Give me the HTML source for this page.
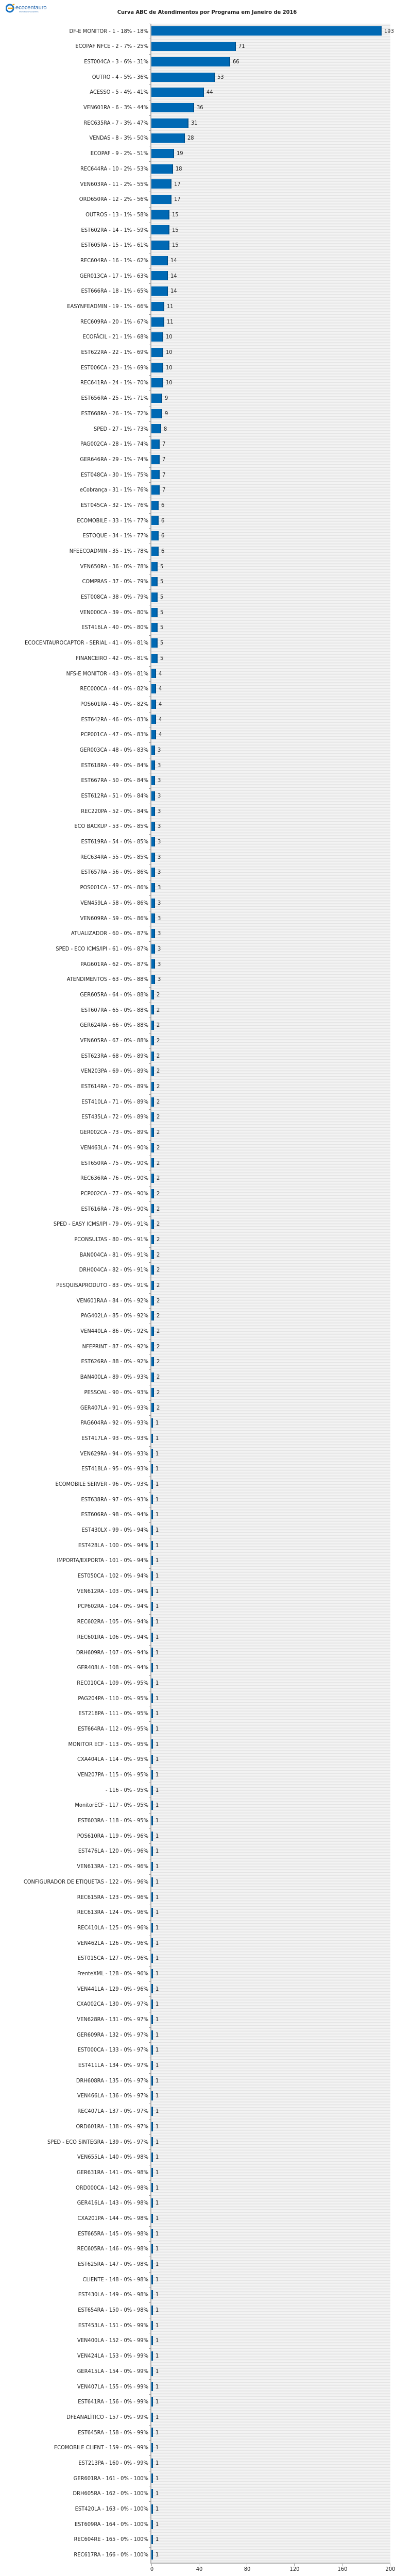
<!DOCTYPE html>
<html><head><meta charset="utf-8">
<style>
*{margin:0;padding:0;box-sizing:border-box}
html,body{width:800px;height:5010px;background:#fff;overflow:hidden}
body{font-family:"DejaVu Sans Condensed","DejaVu Sans","Liberation Sans",sans-serif;color:#222}
#wrap{position:relative;width:800px;height:5010px;overflow:hidden}
#title{position:absolute;top:17px;left:0;width:804px;text-align:center;font-weight:bold;font-size:11px}
#logo{position:absolute;left:11px;top:7px}
#plot{position:absolute;left:294px;top:46px;width:464px;height:4929px;
background:repeating-linear-gradient(to bottom,#e4e4e4 0,#e4e4e4 1px,#f3f3f3 1px,#f3f3f3 3px)}
#axisL{position:absolute;left:292px;top:46px;width:2px;height:4930px;background:#b0b0b0}
#axisB{position:absolute;left:292px;top:4974px;width:466px;height:2px;background:#b0b0b0}
.t{position:absolute;top:4976px;width:1px;height:4px;background:#999}
.tl{position:absolute;top:4980px;width:40px;margin-left:-20px;text-align:center;font-size:11px;line-height:13px}
#rows{position:absolute;left:0;top:45.65px;width:800px}
.r{position:relative;height:29.69px;line-height:29.69px;font-size:11px;white-space:nowrap}
.r::before{content:"";position:absolute;left:289px;top:0;width:4px;height:1px;background:#999}
.l{position:absolute;right:512px;top:0}
.b{position:absolute;left:294px;top:0;height:29.69px}
.bar{display:inline-block;vertical-align:top;margin-top:5.85px;height:18px;background:#0069b4;border-right:2px solid #00508c}
.v{display:inline-block;vertical-align:top;margin-left:5px}
</style></head><body><div id="wrap">
<div id="logo"><svg width="90" height="18" viewBox="0 0 90 18"><circle cx="8" cy="9" r="7" fill="none" stroke="#1a73c4" stroke-width="3"/><path d="M4 9 H15" stroke="#f3a712" stroke-width="2.5"/><path d="M13 3 L17 1" stroke="#f3a712" stroke-width="2"/><text x="19" y="11" font-family="Liberation Sans,sans-serif" font-size="11" fill="#1a5fa8">ecocentauro</text><text x="26" y="17" font-family="Liberation Sans,sans-serif" font-size="3" fill="#1a5fa8">SISTEMAS INTELIGENTES</text></svg></div>
<div id="title">Curva ABC de Atendimentos por Programa em Janeiro de 2016</div>
<div id="plot"></div>
<div id="axisL"></div>
<div id="axisB"></div>
<div class="t" style="left:294px"></div><div class="t" style="left:386px"></div><div class="t" style="left:479px"></div><div class="t" style="left:571px"></div><div class="t" style="left:664px"></div><div class="t" style="left:757px"></div>
<div class="tl" style="left:295px">0</div><div class="tl" style="left:387px">40</div><div class="tl" style="left:480px">80</div><div class="tl" style="left:572px">120</div><div class="tl" style="left:665px">160</div><div class="tl" style="left:758px">200</div>
<div id="rows">
<div class="r"><span class="l">DF-E MONITOR - 1 - 18% - 18%</span><span class="b"><span class="bar" style="width:447px"></span><span class="v">193</span></span></div>
<div class="r"><span class="l">ECOPAF NFCE - 2 - 7% - 25%</span><span class="b"><span class="bar" style="width:164px"></span><span class="v">71</span></span></div>
<div class="r"><span class="l">EST004CA - 3 - 6% - 31%</span><span class="b"><span class="bar" style="width:153px"></span><span class="v">66</span></span></div>
<div class="r"><span class="l">OUTRO - 4 - 5% - 36%</span><span class="b"><span class="bar" style="width:123px"></span><span class="v">53</span></span></div>
<div class="r"><span class="l">ACESSO - 5 - 4% - 41%</span><span class="b"><span class="bar" style="width:102px"></span><span class="v">44</span></span></div>
<div class="r"><span class="l">VEN601RA - 6 - 3% - 44%</span><span class="b"><span class="bar" style="width:83px"></span><span class="v">36</span></span></div>
<div class="r"><span class="l">REC635RA - 7 - 3% - 47%</span><span class="b"><span class="bar" style="width:72px"></span><span class="v">31</span></span></div>
<div class="r"><span class="l">VENDAS - 8 - 3% - 50%</span><span class="b"><span class="bar" style="width:65px"></span><span class="v">28</span></span></div>
<div class="r"><span class="l">ECOPAF - 9 - 2% - 51%</span><span class="b"><span class="bar" style="width:44px"></span><span class="v">19</span></span></div>
<div class="r"><span class="l">REC644RA - 10 - 2% - 53%</span><span class="b"><span class="bar" style="width:42px"></span><span class="v">18</span></span></div>
<div class="r"><span class="l">VEN603RA - 11 - 2% - 55%</span><span class="b"><span class="bar" style="width:39px"></span><span class="v">17</span></span></div>
<div class="r"><span class="l">ORD650RA - 12 - 2% - 56%</span><span class="b"><span class="bar" style="width:39px"></span><span class="v">17</span></span></div>
<div class="r"><span class="l">OUTROS - 13 - 1% - 58%</span><span class="b"><span class="bar" style="width:35px"></span><span class="v">15</span></span></div>
<div class="r"><span class="l">EST602RA - 14 - 1% - 59%</span><span class="b"><span class="bar" style="width:35px"></span><span class="v">15</span></span></div>
<div class="r"><span class="l">EST605RA - 15 - 1% - 61%</span><span class="b"><span class="bar" style="width:35px"></span><span class="v">15</span></span></div>
<div class="r"><span class="l">REC604RA - 16 - 1% - 62%</span><span class="b"><span class="bar" style="width:32px"></span><span class="v">14</span></span></div>
<div class="r"><span class="l">GER013CA - 17 - 1% - 63%</span><span class="b"><span class="bar" style="width:32px"></span><span class="v">14</span></span></div>
<div class="r"><span class="l">EST666RA - 18 - 1% - 65%</span><span class="b"><span class="bar" style="width:32px"></span><span class="v">14</span></span></div>
<div class="r"><span class="l">EASYNFEADMIN - 19 - 1% - 66%</span><span class="b"><span class="bar" style="width:25px"></span><span class="v">11</span></span></div>
<div class="r"><span class="l">REC609RA - 20 - 1% - 67%</span><span class="b"><span class="bar" style="width:25px"></span><span class="v">11</span></span></div>
<div class="r"><span class="l">ECOFÁCIL - 21 - 1% - 68%</span><span class="b"><span class="bar" style="width:23px"></span><span class="v">10</span></span></div>
<div class="r"><span class="l">EST622RA - 22 - 1% - 69%</span><span class="b"><span class="bar" style="width:23px"></span><span class="v">10</span></span></div>
<div class="r"><span class="l">EST006CA - 23 - 1% - 69%</span><span class="b"><span class="bar" style="width:23px"></span><span class="v">10</span></span></div>
<div class="r"><span class="l">REC641RA - 24 - 1% - 70%</span><span class="b"><span class="bar" style="width:23px"></span><span class="v">10</span></span></div>
<div class="r"><span class="l">EST656RA - 25 - 1% - 71%</span><span class="b"><span class="bar" style="width:21px"></span><span class="v">9</span></span></div>
<div class="r"><span class="l">EST668RA - 26 - 1% - 72%</span><span class="b"><span class="bar" style="width:21px"></span><span class="v">9</span></span></div>
<div class="r"><span class="l">SPED - 27 - 1% - 73%</span><span class="b"><span class="bar" style="width:19px"></span><span class="v">8</span></span></div>
<div class="r"><span class="l">PAG002CA - 28 - 1% - 74%</span><span class="b"><span class="bar" style="width:16px"></span><span class="v">7</span></span></div>
<div class="r"><span class="l">GER646RA - 29 - 1% - 74%</span><span class="b"><span class="bar" style="width:16px"></span><span class="v">7</span></span></div>
<div class="r"><span class="l">EST048CA - 30 - 1% - 75%</span><span class="b"><span class="bar" style="width:16px"></span><span class="v">7</span></span></div>
<div class="r"><span class="l">eCobrança - 31 - 1% - 76%</span><span class="b"><span class="bar" style="width:16px"></span><span class="v">7</span></span></div>
<div class="r"><span class="l">EST045CA - 32 - 1% - 76%</span><span class="b"><span class="bar" style="width:14px"></span><span class="v">6</span></span></div>
<div class="r"><span class="l">ECOMOBILE - 33 - 1% - 77%</span><span class="b"><span class="bar" style="width:14px"></span><span class="v">6</span></span></div>
<div class="r"><span class="l">ESTOQUE - 34 - 1% - 77%</span><span class="b"><span class="bar" style="width:14px"></span><span class="v">6</span></span></div>
<div class="r"><span class="l">NFEECOADMIN - 35 - 1% - 78%</span><span class="b"><span class="bar" style="width:14px"></span><span class="v">6</span></span></div>
<div class="r"><span class="l">VEN650RA - 36 - 0% - 78%</span><span class="b"><span class="bar" style="width:12px"></span><span class="v">5</span></span></div>
<div class="r"><span class="l">COMPRAS - 37 - 0% - 79%</span><span class="b"><span class="bar" style="width:12px"></span><span class="v">5</span></span></div>
<div class="r"><span class="l">EST008CA - 38 - 0% - 79%</span><span class="b"><span class="bar" style="width:12px"></span><span class="v">5</span></span></div>
<div class="r"><span class="l">VEN000CA - 39 - 0% - 80%</span><span class="b"><span class="bar" style="width:12px"></span><span class="v">5</span></span></div>
<div class="r"><span class="l">EST416LA - 40 - 0% - 80%</span><span class="b"><span class="bar" style="width:12px"></span><span class="v">5</span></span></div>
<div class="r"><span class="l">ECOCENTAUROCAPTOR - SERIAL - 41 - 0% - 81%</span><span class="b"><span class="bar" style="width:12px"></span><span class="v">5</span></span></div>
<div class="r"><span class="l">FINANCEIRO - 42 - 0% - 81%</span><span class="b"><span class="bar" style="width:12px"></span><span class="v">5</span></span></div>
<div class="r"><span class="l">NFS-E MONITOR - 43 - 0% - 81%</span><span class="b"><span class="bar" style="width:9px"></span><span class="v">4</span></span></div>
<div class="r"><span class="l">REC000CA - 44 - 0% - 82%</span><span class="b"><span class="bar" style="width:9px"></span><span class="v">4</span></span></div>
<div class="r"><span class="l">POS601RA - 45 - 0% - 82%</span><span class="b"><span class="bar" style="width:9px"></span><span class="v">4</span></span></div>
<div class="r"><span class="l">EST642RA - 46 - 0% - 83%</span><span class="b"><span class="bar" style="width:9px"></span><span class="v">4</span></span></div>
<div class="r"><span class="l">PCP001CA - 47 - 0% - 83%</span><span class="b"><span class="bar" style="width:9px"></span><span class="v">4</span></span></div>
<div class="r"><span class="l">GER003CA - 48 - 0% - 83%</span><span class="b"><span class="bar" style="width:7px"></span><span class="v">3</span></span></div>
<div class="r"><span class="l">EST618RA - 49 - 0% - 84%</span><span class="b"><span class="bar" style="width:7px"></span><span class="v">3</span></span></div>
<div class="r"><span class="l">EST667RA - 50 - 0% - 84%</span><span class="b"><span class="bar" style="width:7px"></span><span class="v">3</span></span></div>
<div class="r"><span class="l">EST612RA - 51 - 0% - 84%</span><span class="b"><span class="bar" style="width:7px"></span><span class="v">3</span></span></div>
<div class="r"><span class="l">REC220PA - 52 - 0% - 84%</span><span class="b"><span class="bar" style="width:7px"></span><span class="v">3</span></span></div>
<div class="r"><span class="l">ECO BACKUP - 53 - 0% - 85%</span><span class="b"><span class="bar" style="width:7px"></span><span class="v">3</span></span></div>
<div class="r"><span class="l">EST619RA - 54 - 0% - 85%</span><span class="b"><span class="bar" style="width:7px"></span><span class="v">3</span></span></div>
<div class="r"><span class="l">REC634RA - 55 - 0% - 85%</span><span class="b"><span class="bar" style="width:7px"></span><span class="v">3</span></span></div>
<div class="r"><span class="l">EST657RA - 56 - 0% - 86%</span><span class="b"><span class="bar" style="width:7px"></span><span class="v">3</span></span></div>
<div class="r"><span class="l">POS001CA - 57 - 0% - 86%</span><span class="b"><span class="bar" style="width:7px"></span><span class="v">3</span></span></div>
<div class="r"><span class="l">VEN459LA - 58 - 0% - 86%</span><span class="b"><span class="bar" style="width:7px"></span><span class="v">3</span></span></div>
<div class="r"><span class="l">VEN609RA - 59 - 0% - 86%</span><span class="b"><span class="bar" style="width:7px"></span><span class="v">3</span></span></div>
<div class="r"><span class="l">ATUALIZADOR - 60 - 0% - 87%</span><span class="b"><span class="bar" style="width:7px"></span><span class="v">3</span></span></div>
<div class="r"><span class="l">SPED - ECO ICMS/IPI - 61 - 0% - 87%</span><span class="b"><span class="bar" style="width:7px"></span><span class="v">3</span></span></div>
<div class="r"><span class="l">PAG601RA - 62 - 0% - 87%</span><span class="b"><span class="bar" style="width:7px"></span><span class="v">3</span></span></div>
<div class="r"><span class="l">ATENDIMENTOS - 63 - 0% - 88%</span><span class="b"><span class="bar" style="width:7px"></span><span class="v">3</span></span></div>
<div class="r"><span class="l">GER605RA - 64 - 0% - 88%</span><span class="b"><span class="bar" style="width:5px"></span><span class="v">2</span></span></div>
<div class="r"><span class="l">EST607RA - 65 - 0% - 88%</span><span class="b"><span class="bar" style="width:5px"></span><span class="v">2</span></span></div>
<div class="r"><span class="l">GER624RA - 66 - 0% - 88%</span><span class="b"><span class="bar" style="width:5px"></span><span class="v">2</span></span></div>
<div class="r"><span class="l">VEN605RA - 67 - 0% - 88%</span><span class="b"><span class="bar" style="width:5px"></span><span class="v">2</span></span></div>
<div class="r"><span class="l">EST623RA - 68 - 0% - 89%</span><span class="b"><span class="bar" style="width:5px"></span><span class="v">2</span></span></div>
<div class="r"><span class="l">VEN203PA - 69 - 0% - 89%</span><span class="b"><span class="bar" style="width:5px"></span><span class="v">2</span></span></div>
<div class="r"><span class="l">EST614RA - 70 - 0% - 89%</span><span class="b"><span class="bar" style="width:5px"></span><span class="v">2</span></span></div>
<div class="r"><span class="l">EST410LA - 71 - 0% - 89%</span><span class="b"><span class="bar" style="width:5px"></span><span class="v">2</span></span></div>
<div class="r"><span class="l">EST435LA - 72 - 0% - 89%</span><span class="b"><span class="bar" style="width:5px"></span><span class="v">2</span></span></div>
<div class="r"><span class="l">GER002CA - 73 - 0% - 89%</span><span class="b"><span class="bar" style="width:5px"></span><span class="v">2</span></span></div>
<div class="r"><span class="l">VEN463LA - 74 - 0% - 90%</span><span class="b"><span class="bar" style="width:5px"></span><span class="v">2</span></span></div>
<div class="r"><span class="l">EST650RA - 75 - 0% - 90%</span><span class="b"><span class="bar" style="width:5px"></span><span class="v">2</span></span></div>
<div class="r"><span class="l">REC636RA - 76 - 0% - 90%</span><span class="b"><span class="bar" style="width:5px"></span><span class="v">2</span></span></div>
<div class="r"><span class="l">PCP002CA - 77 - 0% - 90%</span><span class="b"><span class="bar" style="width:5px"></span><span class="v">2</span></span></div>
<div class="r"><span class="l">EST616RA - 78 - 0% - 90%</span><span class="b"><span class="bar" style="width:5px"></span><span class="v">2</span></span></div>
<div class="r"><span class="l">SPED - EASY ICMS/IPI - 79 - 0% - 91%</span><span class="b"><span class="bar" style="width:5px"></span><span class="v">2</span></span></div>
<div class="r"><span class="l">PCONSULTAS - 80 - 0% - 91%</span><span class="b"><span class="bar" style="width:5px"></span><span class="v">2</span></span></div>
<div class="r"><span class="l">BAN004CA - 81 - 0% - 91%</span><span class="b"><span class="bar" style="width:5px"></span><span class="v">2</span></span></div>
<div class="r"><span class="l">DRH004CA - 82 - 0% - 91%</span><span class="b"><span class="bar" style="width:5px"></span><span class="v">2</span></span></div>
<div class="r"><span class="l">PESQUISAPRODUTO - 83 - 0% - 91%</span><span class="b"><span class="bar" style="width:5px"></span><span class="v">2</span></span></div>
<div class="r"><span class="l">VEN601RAA - 84 - 0% - 92%</span><span class="b"><span class="bar" style="width:5px"></span><span class="v">2</span></span></div>
<div class="r"><span class="l">PAG402LA - 85 - 0% - 92%</span><span class="b"><span class="bar" style="width:5px"></span><span class="v">2</span></span></div>
<div class="r"><span class="l">VEN440LA - 86 - 0% - 92%</span><span class="b"><span class="bar" style="width:5px"></span><span class="v">2</span></span></div>
<div class="r"><span class="l">NFEPRINT - 87 - 0% - 92%</span><span class="b"><span class="bar" style="width:5px"></span><span class="v">2</span></span></div>
<div class="r"><span class="l">EST626RA - 88 - 0% - 92%</span><span class="b"><span class="bar" style="width:5px"></span><span class="v">2</span></span></div>
<div class="r"><span class="l">BAN400LA - 89 - 0% - 93%</span><span class="b"><span class="bar" style="width:5px"></span><span class="v">2</span></span></div>
<div class="r"><span class="l">PESSOAL - 90 - 0% - 93%</span><span class="b"><span class="bar" style="width:5px"></span><span class="v">2</span></span></div>
<div class="r"><span class="l">GER407LA - 91 - 0% - 93%</span><span class="b"><span class="bar" style="width:5px"></span><span class="v">2</span></span></div>
<div class="r"><span class="l">PAG604RA - 92 - 0% - 93%</span><span class="b"><span class="bar" style="width:3px"></span><span class="v">1</span></span></div>
<div class="r"><span class="l">EST417LA - 93 - 0% - 93%</span><span class="b"><span class="bar" style="width:3px"></span><span class="v">1</span></span></div>
<div class="r"><span class="l">VEN629RA - 94 - 0% - 93%</span><span class="b"><span class="bar" style="width:3px"></span><span class="v">1</span></span></div>
<div class="r"><span class="l">EST418LA - 95 - 0% - 93%</span><span class="b"><span class="bar" style="width:3px"></span><span class="v">1</span></span></div>
<div class="r"><span class="l">ECOMOBILE SERVER - 96 - 0% - 93%</span><span class="b"><span class="bar" style="width:3px"></span><span class="v">1</span></span></div>
<div class="r"><span class="l">EST638RA - 97 - 0% - 93%</span><span class="b"><span class="bar" style="width:3px"></span><span class="v">1</span></span></div>
<div class="r"><span class="l">EST606RA - 98 - 0% - 94%</span><span class="b"><span class="bar" style="width:3px"></span><span class="v">1</span></span></div>
<div class="r"><span class="l">EST430LX - 99 - 0% - 94%</span><span class="b"><span class="bar" style="width:3px"></span><span class="v">1</span></span></div>
<div class="r"><span class="l">EST428LA - 100 - 0% - 94%</span><span class="b"><span class="bar" style="width:3px"></span><span class="v">1</span></span></div>
<div class="r"><span class="l">IMPORTA/EXPORTA - 101 - 0% - 94%</span><span class="b"><span class="bar" style="width:3px"></span><span class="v">1</span></span></div>
<div class="r"><span class="l">EST050CA - 102 - 0% - 94%</span><span class="b"><span class="bar" style="width:3px"></span><span class="v">1</span></span></div>
<div class="r"><span class="l">VEN612RA - 103 - 0% - 94%</span><span class="b"><span class="bar" style="width:3px"></span><span class="v">1</span></span></div>
<div class="r"><span class="l">PCP602RA - 104 - 0% - 94%</span><span class="b"><span class="bar" style="width:3px"></span><span class="v">1</span></span></div>
<div class="r"><span class="l">REC602RA - 105 - 0% - 94%</span><span class="b"><span class="bar" style="width:3px"></span><span class="v">1</span></span></div>
<div class="r"><span class="l">REC601RA - 106 - 0% - 94%</span><span class="b"><span class="bar" style="width:3px"></span><span class="v">1</span></span></div>
<div class="r"><span class="l">DRH609RA - 107 - 0% - 94%</span><span class="b"><span class="bar" style="width:3px"></span><span class="v">1</span></span></div>
<div class="r"><span class="l">GER408LA - 108 - 0% - 94%</span><span class="b"><span class="bar" style="width:3px"></span><span class="v">1</span></span></div>
<div class="r"><span class="l">REC010CA - 109 - 0% - 95%</span><span class="b"><span class="bar" style="width:3px"></span><span class="v">1</span></span></div>
<div class="r"><span class="l">PAG204PA - 110 - 0% - 95%</span><span class="b"><span class="bar" style="width:3px"></span><span class="v">1</span></span></div>
<div class="r"><span class="l">EST218PA - 111 - 0% - 95%</span><span class="b"><span class="bar" style="width:3px"></span><span class="v">1</span></span></div>
<div class="r"><span class="l">EST664RA - 112 - 0% - 95%</span><span class="b"><span class="bar" style="width:3px"></span><span class="v">1</span></span></div>
<div class="r"><span class="l">MONITOR ECF - 113 - 0% - 95%</span><span class="b"><span class="bar" style="width:3px"></span><span class="v">1</span></span></div>
<div class="r"><span class="l">CXA404LA - 114 - 0% - 95%</span><span class="b"><span class="bar" style="width:3px"></span><span class="v">1</span></span></div>
<div class="r"><span class="l">VEN207PA - 115 - 0% - 95%</span><span class="b"><span class="bar" style="width:3px"></span><span class="v">1</span></span></div>
<div class="r"><span class="l"> - 116 - 0% - 95%</span><span class="b"><span class="bar" style="width:3px"></span><span class="v">1</span></span></div>
<div class="r"><span class="l">MonitorECF - 117 - 0% - 95%</span><span class="b"><span class="bar" style="width:3px"></span><span class="v">1</span></span></div>
<div class="r"><span class="l">EST603RA - 118 - 0% - 95%</span><span class="b"><span class="bar" style="width:3px"></span><span class="v">1</span></span></div>
<div class="r"><span class="l">POS610RA - 119 - 0% - 96%</span><span class="b"><span class="bar" style="width:3px"></span><span class="v">1</span></span></div>
<div class="r"><span class="l">EST476LA - 120 - 0% - 96%</span><span class="b"><span class="bar" style="width:3px"></span><span class="v">1</span></span></div>
<div class="r"><span class="l">VEN613RA - 121 - 0% - 96%</span><span class="b"><span class="bar" style="width:3px"></span><span class="v">1</span></span></div>
<div class="r"><span class="l">CONFIGURADOR DE ETIQUETAS - 122 - 0% - 96%</span><span class="b"><span class="bar" style="width:3px"></span><span class="v">1</span></span></div>
<div class="r"><span class="l">REC615RA - 123 - 0% - 96%</span><span class="b"><span class="bar" style="width:3px"></span><span class="v">1</span></span></div>
<div class="r"><span class="l">REC613RA - 124 - 0% - 96%</span><span class="b"><span class="bar" style="width:3px"></span><span class="v">1</span></span></div>
<div class="r"><span class="l">REC410LA - 125 - 0% - 96%</span><span class="b"><span class="bar" style="width:3px"></span><span class="v">1</span></span></div>
<div class="r"><span class="l">VEN462LA - 126 - 0% - 96%</span><span class="b"><span class="bar" style="width:3px"></span><span class="v">1</span></span></div>
<div class="r"><span class="l">EST015CA - 127 - 0% - 96%</span><span class="b"><span class="bar" style="width:3px"></span><span class="v">1</span></span></div>
<div class="r"><span class="l">FrenteXML - 128 - 0% - 96%</span><span class="b"><span class="bar" style="width:3px"></span><span class="v">1</span></span></div>
<div class="r"><span class="l">VEN441LA - 129 - 0% - 96%</span><span class="b"><span class="bar" style="width:3px"></span><span class="v">1</span></span></div>
<div class="r"><span class="l">CXA002CA - 130 - 0% - 97%</span><span class="b"><span class="bar" style="width:3px"></span><span class="v">1</span></span></div>
<div class="r"><span class="l">VEN628RA - 131 - 0% - 97%</span><span class="b"><span class="bar" style="width:3px"></span><span class="v">1</span></span></div>
<div class="r"><span class="l">GER609RA - 132 - 0% - 97%</span><span class="b"><span class="bar" style="width:3px"></span><span class="v">1</span></span></div>
<div class="r"><span class="l">EST000CA - 133 - 0% - 97%</span><span class="b"><span class="bar" style="width:3px"></span><span class="v">1</span></span></div>
<div class="r"><span class="l">EST411LA - 134 - 0% - 97%</span><span class="b"><span class="bar" style="width:3px"></span><span class="v">1</span></span></div>
<div class="r"><span class="l">DRH608RA - 135 - 0% - 97%</span><span class="b"><span class="bar" style="width:3px"></span><span class="v">1</span></span></div>
<div class="r"><span class="l">VEN466LA - 136 - 0% - 97%</span><span class="b"><span class="bar" style="width:3px"></span><span class="v">1</span></span></div>
<div class="r"><span class="l">REC407LA - 137 - 0% - 97%</span><span class="b"><span class="bar" style="width:3px"></span><span class="v">1</span></span></div>
<div class="r"><span class="l">ORD601RA - 138 - 0% - 97%</span><span class="b"><span class="bar" style="width:3px"></span><span class="v">1</span></span></div>
<div class="r"><span class="l">SPED - ECO SINTEGRA - 139 - 0% - 97%</span><span class="b"><span class="bar" style="width:3px"></span><span class="v">1</span></span></div>
<div class="r"><span class="l">VEN655LA - 140 - 0% - 98%</span><span class="b"><span class="bar" style="width:3px"></span><span class="v">1</span></span></div>
<div class="r"><span class="l">GER631RA - 141 - 0% - 98%</span><span class="b"><span class="bar" style="width:3px"></span><span class="v">1</span></span></div>
<div class="r"><span class="l">ORD000CA - 142 - 0% - 98%</span><span class="b"><span class="bar" style="width:3px"></span><span class="v">1</span></span></div>
<div class="r"><span class="l">GER416LA - 143 - 0% - 98%</span><span class="b"><span class="bar" style="width:3px"></span><span class="v">1</span></span></div>
<div class="r"><span class="l">CXA201PA - 144 - 0% - 98%</span><span class="b"><span class="bar" style="width:3px"></span><span class="v">1</span></span></div>
<div class="r"><span class="l">EST665RA - 145 - 0% - 98%</span><span class="b"><span class="bar" style="width:3px"></span><span class="v">1</span></span></div>
<div class="r"><span class="l">REC605RA - 146 - 0% - 98%</span><span class="b"><span class="bar" style="width:3px"></span><span class="v">1</span></span></div>
<div class="r"><span class="l">EST625RA - 147 - 0% - 98%</span><span class="b"><span class="bar" style="width:3px"></span><span class="v">1</span></span></div>
<div class="r"><span class="l">CLIENTE - 148 - 0% - 98%</span><span class="b"><span class="bar" style="width:3px"></span><span class="v">1</span></span></div>
<div class="r"><span class="l">EST430LA - 149 - 0% - 98%</span><span class="b"><span class="bar" style="width:3px"></span><span class="v">1</span></span></div>
<div class="r"><span class="l">EST654RA - 150 - 0% - 98%</span><span class="b"><span class="bar" style="width:3px"></span><span class="v">1</span></span></div>
<div class="r"><span class="l">EST453LA - 151 - 0% - 99%</span><span class="b"><span class="bar" style="width:3px"></span><span class="v">1</span></span></div>
<div class="r"><span class="l">VEN400LA - 152 - 0% - 99%</span><span class="b"><span class="bar" style="width:3px"></span><span class="v">1</span></span></div>
<div class="r"><span class="l">VEN424LA - 153 - 0% - 99%</span><span class="b"><span class="bar" style="width:3px"></span><span class="v">1</span></span></div>
<div class="r"><span class="l">GER415LA - 154 - 0% - 99%</span><span class="b"><span class="bar" style="width:3px"></span><span class="v">1</span></span></div>
<div class="r"><span class="l">VEN407LA - 155 - 0% - 99%</span><span class="b"><span class="bar" style="width:3px"></span><span class="v">1</span></span></div>
<div class="r"><span class="l">EST641RA - 156 - 0% - 99%</span><span class="b"><span class="bar" style="width:3px"></span><span class="v">1</span></span></div>
<div class="r"><span class="l">DFEANALÍTICO - 157 - 0% - 99%</span><span class="b"><span class="bar" style="width:3px"></span><span class="v">1</span></span></div>
<div class="r"><span class="l">EST645RA - 158 - 0% - 99%</span><span class="b"><span class="bar" style="width:3px"></span><span class="v">1</span></span></div>
<div class="r"><span class="l">ECOMOBILE CLIENT - 159 - 0% - 99%</span><span class="b"><span class="bar" style="width:3px"></span><span class="v">1</span></span></div>
<div class="r"><span class="l">EST213PA - 160 - 0% - 99%</span><span class="b"><span class="bar" style="width:3px"></span><span class="v">1</span></span></div>
<div class="r"><span class="l">GER601RA - 161 - 0% - 100%</span><span class="b"><span class="bar" style="width:3px"></span><span class="v">1</span></span></div>
<div class="r"><span class="l">DRH605RA - 162 - 0% - 100%</span><span class="b"><span class="bar" style="width:3px"></span><span class="v">1</span></span></div>
<div class="r"><span class="l">EST420LA - 163 - 0% - 100%</span><span class="b"><span class="bar" style="width:3px"></span><span class="v">1</span></span></div>
<div class="r"><span class="l">EST609RA - 164 - 0% - 100%</span><span class="b"><span class="bar" style="width:3px"></span><span class="v">1</span></span></div>
<div class="r"><span class="l">REC604RE - 165 - 0% - 100%</span><span class="b"><span class="bar" style="width:3px"></span><span class="v">1</span></span></div>
<div class="r"><span class="l">REC617RA - 166 - 0% - 100%</span><span class="b"><span class="bar" style="width:3px"></span><span class="v">1</span></span></div>
</div>
</div></body></html>
